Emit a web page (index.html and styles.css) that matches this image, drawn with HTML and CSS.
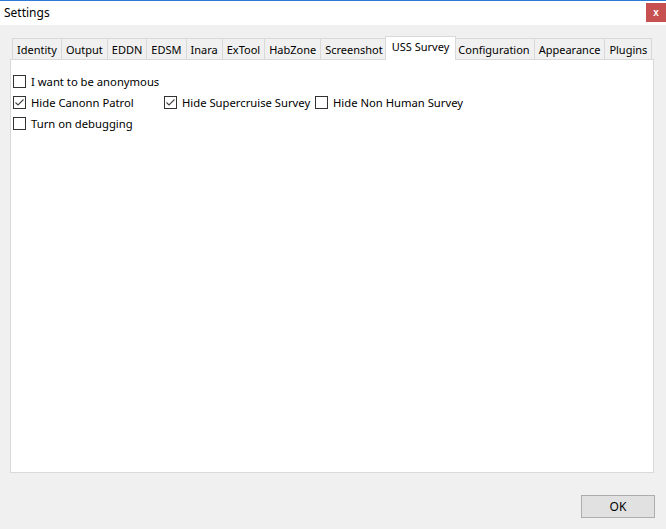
FILE: index.html
```html
<!DOCTYPE html>
<html>
<head>
<meta charset="utf-8">
<title>Settings</title>
<link rel="stylesheet" href="styles.css">
</head>
<body>
<div class="window">
  <div class="titlebar">
    <span class="title">Settings</span>
    <button class="close">x</button>
  </div>
  <div class="tabs">
    <div class="tabstrip">
      <div class="tab">Identity</div>
      <div class="tab">Output</div>
      <div class="tab">EDDN</div>
      <div class="tab">EDSM</div>
      <div class="tab">Inara</div>
      <div class="tab">ExTool</div>
      <div class="tab">HabZone</div>
      <div class="tab">Screenshot</div>
      <div class="tab selected">USS Survey</div>
      <div class="tab">Configuration</div>
      <div class="tab">Appearance</div>
      <div class="tab last">Plugins</div>
    </div>
    <div class="panel">
      <div class="row">
        <label class="cb"><span class="box"></span><span class="label">I want to be anonymous</span></label>
      </div>
      <div class="row">
        <label class="cb fixed"><span class="box"><svg viewBox="0 0 11 11" width="11" height="11"><polyline points="1.5,5.5 4,8 9.5,2.5" fill="none" stroke="#444" stroke-width="1.1"/></svg></span><span class="label">Hide Canonn Patrol</span></label>
        <label class="cb fixed"><span class="box"><svg viewBox="0 0 11 11" width="11" height="11"><polyline points="1.5,5.5 4,8 9.5,2.5" fill="none" stroke="#444" stroke-width="1.1"/></svg></span><span class="label">Hide Supercruise Survey</span></label>
        <label class="cb"><span class="box"></span><span class="label">Hide Non Human Survey</span></label>
      </div>
      <div class="row">
        <label class="cb"><span class="box"></span><span class="label">Turn on debugging</span></label>
      </div>
    </div>
  </div>
  <div class="footer">
    <button class="ok">OK</button>
  </div>
</div>
</body>
</html>
```
FILE: styles.css
```css
* { box-sizing: border-box; }
html, body {
  margin: 0;
  padding: 0;
  background: #f0f0f0;
}
body {
  font-family: "Noto Sans", "Open Sans", sans-serif;
  font-size: 11px;
  color: #000;
}
.window {
  width: 666px;
  height: 529px;
  display: flex;
  flex-direction: column;
}
.titlebar {
  height: 25px;
  border-top: 1px solid #2b7ad4;
  background: #fff;
  display: flex;
  align-items: flex-start;
  justify-content: space-between;
}
.title {
  font-size: 12px;
  margin-left: 4px;
  margin-top: 4px;
  line-height: 16px;
}
.close {
  width: 20px;
  height: 19px;
  margin-top: 2px;
  margin-right: 0;
  background: #c75050;
  color: #fff;
  border: none;
  padding: 0;
  font-family: "Liberation Sans", sans-serif;
  font-weight: bold;
  font-size: 10px;
  line-height: 18px;
}
.tabs {
  margin: 11px 12px 0 10px;
  display: flex;
  flex-direction: column;
}
.tabstrip {
  display: flex;
  align-items: flex-end;
  padding-left: 2px;
  height: 23px;
}
.tab {
  height: 21px;
  padding: 0 4px;
  border: 1px solid #d9d9d9;
  border-bottom: none;
  border-right: none;
  background: #f0f0f0;
  line-height: 20px;
  padding-top: 1px;
  white-space: nowrap;
}
.tab.last {
  border-right: 1px solid #d9d9d9;
}
.tab.selected {
  position: relative;
  z-index: 1;
  height: 24px;
  margin: 0 -2px -1px -2px;
  padding: 0 6px;
  background: #fff;
  border-right: 1px solid #d9d9d9;
  line-height: 19px;
}
.tab.selected + .tab {
  border-left: none;
}
.panel {
  height: 414px;
  background: #fff;
  border: 1px solid #d9d9d9;
  padding: 11px 2px 0 2px;
}
.row {
  display: flex;
  height: 21px;
  align-items: center;
}
.cb {
  display: flex;
  align-items: center;
  white-space: nowrap;
}
.cb.fixed {
  width: 151px;
}
.box {
  width: 13px;
  height: 13px;
  border: 1px solid #333;
  background: #fff;
  margin-right: 5px;
  display: flex;
  align-items: center;
  justify-content: center;
}
.box svg { display: block; }
.label {
  font-size: 11.25px;
  line-height: 14px;
}
.footer {
  display: flex;
  justify-content: flex-end;
  padding: 22px 11px 0 0;
}
.ok {
  width: 74px;
  height: 23px;
  background: #e1e1e1;
  border: 1px solid #adadad;
  font-family: "Noto Sans", "Open Sans", sans-serif;
  font-size: 12px;
  color: #000;
  padding: 0;
}
```
